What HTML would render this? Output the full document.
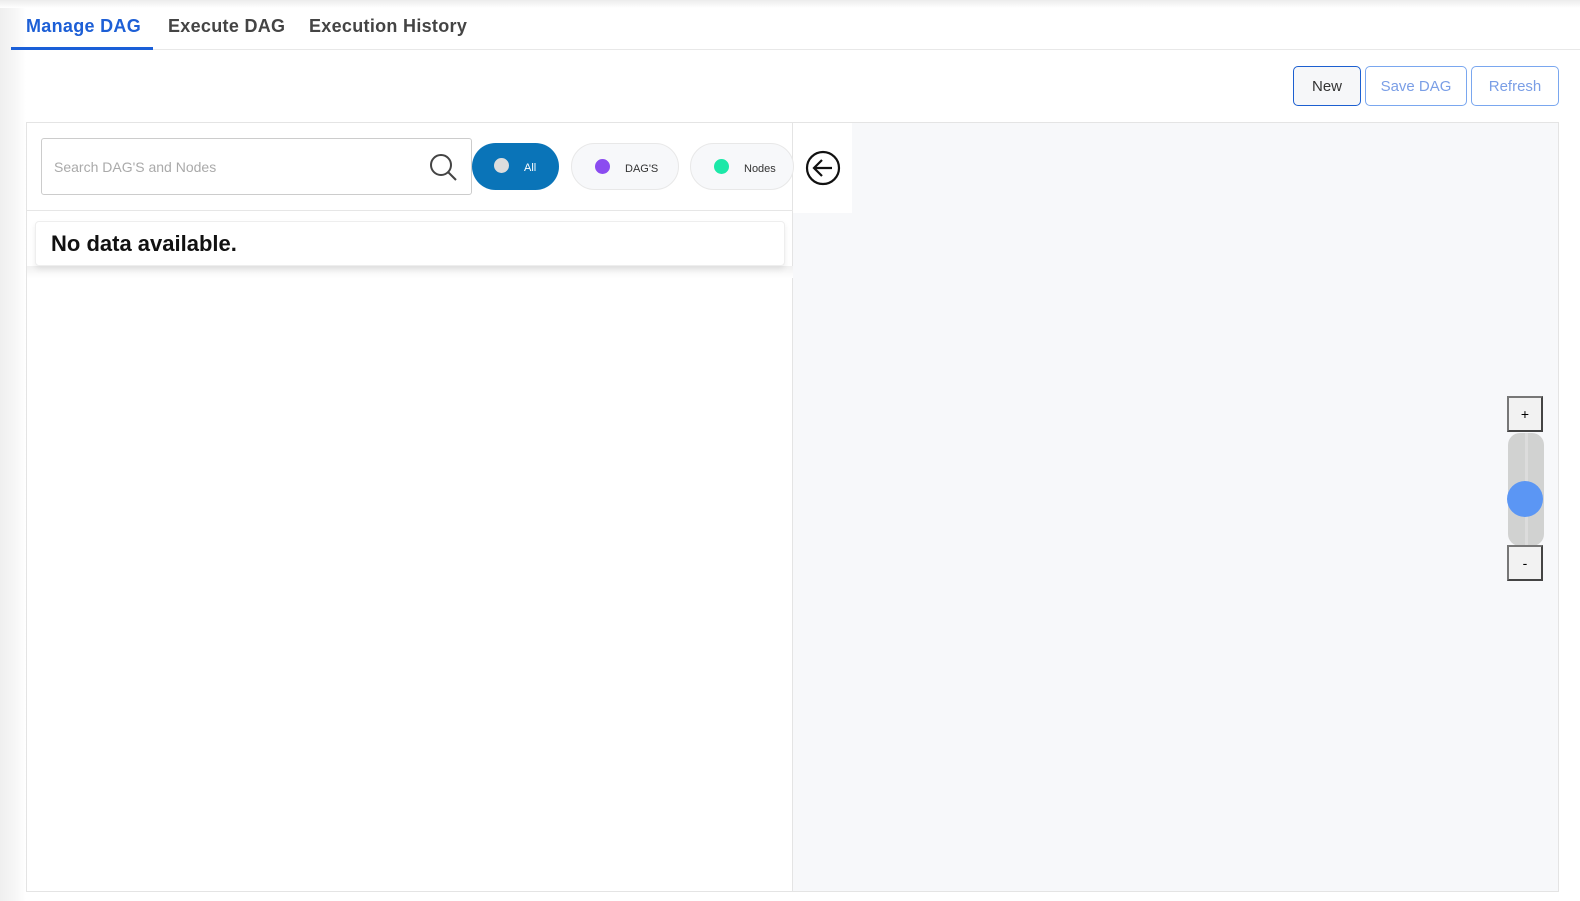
<!DOCTYPE html>
<html><head><style>
*{box-sizing:border-box;margin:0;padding:0}
body{width:1580px;height:901px;background:#fff;font-family:"Liberation Sans",sans-serif;position:relative;overflow:hidden}
.lshade{position:absolute;left:0;top:0;width:26px;height:901px;background:linear-gradient(to right,#efefef,#f7f7f7 60%,#fff)}
.tshade{position:absolute;left:0;top:0;width:1580px;height:8px;background:linear-gradient(#ececec,#fff)}
.tab{position:absolute;top:16px;font-size:18px;font-weight:bold;color:#444;letter-spacing:.3px}
.btn{position:absolute;top:66px;height:40px;border:1px solid #7aa7ef;border-radius:5px;font-size:15px;color:#7a9ee6;display:flex;align-items:center;justify-content:center;background:#fff}
.panel{position:absolute;left:26px;top:122px;width:1533px;height:770px;border:1px solid #e4e4e4;background:#f7f8fa}
.pill{position:absolute;top:143px;height:47px;border-radius:24px;font-size:11px}
.dot{position:absolute;width:15px;height:15px;border-radius:50%;top:15px}
</style></head><body>
<div class="lshade"></div><div class="tshade"></div>
<div class="tab" style="left:26px;color:#1d5fd6">Manage DAG</div>
<div style="position:absolute;left:11px;top:47px;width:142px;height:3px;background:#1a5fd8"></div>
<div class="tab" style="left:168px">Execute DAG</div>
<div class="tab" style="left:309px">Execution History</div>
<div style="position:absolute;left:153px;top:49px;width:1427px;height:1px;background:#e8e8e8"></div>
<div class="btn" style="left:1293px;width:68px;border-color:#1c5fd0;color:#333;background:#f6f7f9">New</div>
<div class="btn" style="left:1365px;width:102px">Save DAG</div>
<div class="btn" style="left:1471px;width:88px">Refresh</div>
<div class="panel"></div>
<div style="position:absolute;left:27px;top:123px;width:766px;height:768px;background:#fff;border-right:1px solid #e4e4e4"></div>
<div style="position:absolute;left:793px;top:123px;width:59px;height:90px;background:#fff"></div>
<div style="position:absolute;left:27px;top:210px;width:766px;height:1px;background:#e6e6e6"></div>
<div style="position:absolute;left:27px;top:266px;width:766px;height:12px;background:linear-gradient(#f0f0f0,#fff)"></div>
<div style="position:absolute;left:41px;top:138px;width:431px;height:57px;border:1px solid #ccc;border-radius:3px;background:#fff">
<span style="position:absolute;left:12px;top:20px;font-size:14px;color:#aaa">Search DAG'S and Nodes</span>
<svg style="position:absolute;left:386px;top:13px" width="30" height="30" viewBox="0 0 30 30"><circle cx="13" cy="13" r="10" fill="none" stroke="#444" stroke-width="2"/><line x1="20" y1="20" x2="28" y2="28" stroke="#444" stroke-width="2"/></svg></div>
<div class="pill" style="left:472px;width:87px;background:#0a74b8;color:#fff"><div class="dot" style="left:22px;background:#ddd"></div><span style="position:absolute;left:52px;top:19px">All</span></div>
<div class="pill" style="left:571px;width:108px;background:#f7f8fa;border:1px solid #e8e8e8;color:#333"><div class="dot" style="left:23px;background:#8b4cf0"></div><span style="position:absolute;left:53px;top:19px">DAG'S</span></div>
<div class="pill" style="left:690px;width:104px;background:#f7f8fa;border:1px solid #e8e8e8;color:#333"><div class="dot" style="left:23px;background:#1ce8a8"></div><span style="position:absolute;left:53px;top:19px">Nodes</span></div>
<svg style="position:absolute;left:805px;top:150px" width="36" height="36" viewBox="0 0 36 36"><circle cx="18" cy="18" r="16" fill="none" stroke="#111" stroke-width="2.2"/><path d="M27 18H10M17 10l-8 8 8 8" fill="none" stroke="#111" stroke-width="2.2"/></svg>
<div style="position:absolute;left:35px;top:221px;width:750px;height:45px;background:#fff;border:1px solid #eee;border-radius:4px;box-shadow:0 3px 6px rgba(0,0,0,.08);font-size:22px;font-weight:bold;color:#111;padding:9px 15px">No data available.</div>
<div style="position:absolute;left:1507px;top:396px;width:36px;height:36px;background:#f2f2f2;border:2px solid #444;border-color:#777 #444 #444 #777;text-align:center;font-size:14px;line-height:32px">+</div>
<div style="position:absolute;left:1508px;top:433px;width:36px;height:113px;background:#d1d2d1;border-radius:12px"><div style="position:absolute;left:17px;top:0;width:3px;height:113px;background:#dcdcdc"></div></div>
<div style="position:absolute;left:1507px;top:481px;width:36px;height:36px;border-radius:50%;background:#5b96f4"></div>
<div style="position:absolute;left:1507px;top:545px;width:36px;height:36px;background:#f2f2f2;border:2px solid #444;border-color:#777 #444 #444 #777;text-align:center;font-size:14px;line-height:32px">-</div>
</body></html>
